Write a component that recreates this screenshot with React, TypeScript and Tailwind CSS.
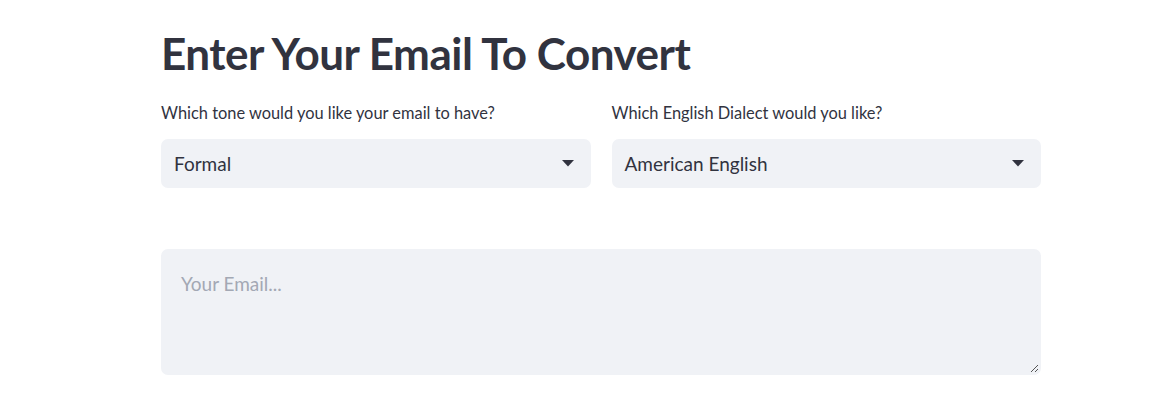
import React from "react";

function Caret() {
  return (
    <svg width="12" height="7" viewBox="0 0 12 7" className="shrink-0">
      <path d="M0 0 L12 0 L6 6.5 Z" fill="#31333F" />
    </svg>
  );
}

function Select({ label, value }: { label: string; value: string }) {
  return (
    <div className="flex flex-col">
      <div className="text-[16.4px] leading-[20px] text-[#31333F] mb-[16px] mt-[6px]">{label}</div>
      <div className="h-[49px] rounded-[7px] bg-[#F0F2F6] flex items-center justify-between pl-[13px] pr-[17px]">
        <span className="text-[19px] text-[#31333F] pt-[1px]">{value}</span>
        <Caret />
      </div>
    </div>
  );
}

export default function App() {
  return (
    <div className="w-[1175px] h-[407px] bg-white overflow-hidden" style={{ fontFamily: "Lato, 'Noto Sans', sans-serif" }}>
      <div className="ml-[161px] w-[880px] pt-[27px]">
        <h1 className="text-[44px] leading-[52px] font-bold text-[#31333F] tracking-[-0.5px]">Enter Your Email To Convert</h1>
        <div className="grid grid-cols-2 gap-[21px] mt-[18px]">
          <Select label="Which tone would you like your email to have?" value="Formal" />
          <Select label="Which English Dialect would you like?" value="American English" />
        </div>
        <div className="mt-[61px] h-[126px] rounded-[7px] bg-[#F0F2F6] relative px-[20px] pt-[21px]">
          <span className="text-[19px] text-[#A3A8B4]">Your Email...</span>
          <svg className="absolute right-[2px] bottom-[2px]" width="9" height="9" viewBox="0 0 9 9">
            <path d="M8 1 L1 8 M8 5 L5 8" stroke="#555" strokeWidth="1" />
          </svg>
        </div>
      </div>
    </div>
  );
}
